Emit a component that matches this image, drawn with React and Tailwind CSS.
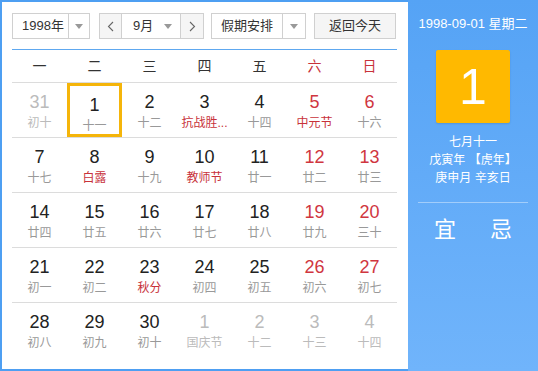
const FONT = { fontFamily: '"Liberation Sans", Arial, "Noto Sans CJK SC", sans-serif' }

const weekdays = ['一', '二', '三', '四', '五', '六', '日']

// [day, lunar, muted, lunarRed]
const weeks = [
  [[31, '初十', true], [1, '十一'], [2, '十二'], [3, '抗战胜...', false, true], [4, '十四'], [5, '中元节', false, true], [6, '十六']],
  [[7, '十七'], [8, '白露', false, true], [9, '十九'], [10, '教师节', false, true], [11, '廿一'], [12, '廿二'], [13, '廿三']],
  [[14, '廿四'], [15, '廿五'], [16, '廿六'], [17, '廿七'], [18, '廿八'], [19, '廿九'], [20, '三十']],
  [[21, '初一'], [22, '初二'], [23, '秋分', false, true], [24, '初四'], [25, '初五'], [26, '初六'], [27, '初七']],
  [[28, '初八'], [29, '初九'], [30, '初十'], [1, '国庆节', true], [2, '十二', true], [3, '十三', true], [4, '十四', true]]
]

function Caret() {
  return (
    <svg width="8" height="5" viewBox="0 0 8 5">
      <path d="M0 0h8L4 5z" fill="#999" />
    </svg>
  )
}

function Select({ label, width, textW }) {
  return (
    <div className="flex h-[26px] items-stretch border border-[#d0d0d0] bg-white" style={{ width }}>
      <div className="flex items-center pl-[9px] text-[13px] text-[#333]" style={{ width: textW }}>{label}</div>
      <div className="flex flex-1 items-center justify-center border-l border-[#d0d0d0]">
        <Caret />
      </div>
    </div>
  )
}

function Chevron({ dir }) {
  return (
    <svg width="7" height="11" viewBox="0 0 7 11">
      <path d={dir === 'l' ? 'M6 1L1.5 5.5 6 10' : 'M1 1l4.5 4.5L1 10'} fill="none" stroke="#666" strokeWidth="1.1" />
    </svg>
  )
}

export default function App() {
  return (
    <div className="flex h-[371px] w-[538px] overflow-hidden" style={FONT}>
      {/* calendar body */}
      <div className="flex w-[408px] flex-col border-y-2 border-l-2 border-[#4e9ff2] bg-white pl-[10px] pr-[11px]">
        <div className="flex items-center pt-[11px]">
          <Select label="1998年" width={78} textW={55} />
          <div className="ml-[9px] flex h-[26px] w-[105px] border border-[#d0d0d0]">
            <div className="flex w-[21px] items-center justify-center bg-[#f5f5f5]"><Chevron dir="l" /></div>
            <div className="flex flex-1 items-center border-l border-[#d0d0d0] pl-[11px] text-[13px] text-[#333]">
              <span className="flex-1">9月</span>
              <span className="mr-[8px] flex"><Caret /></span>
            </div>
            <div className="flex w-[23px] items-center justify-center border-l border-[#d0d0d0] bg-[#f5f5f5]"><Chevron dir="r" /></div>
          </div>
          <div className="ml-[7px]">
            <Select label="假期安排" width={95} textW={70} />
          </div>
          <div className="ml-[8px] flex h-[26px] w-[82px] items-center justify-center border border-[#d0d0d0] bg-[#f5f5f5] text-[13px] text-[#333]">
            返回今天
          </div>
        </div>

        <div className="mt-[10px] grid h-[34px] grid-cols-7 border-t border-b border-t-[#5ea8f0] border-b-[#dcdcdc] text-[14px]">
          {weekdays.map((w, i) => (
            <div key={w} className={`flex items-center justify-center ${i > 4 ? 'text-[#c8323a]' : 'text-[#333]'}`}>{w}</div>
          ))}
        </div>

        {weeks.map((row, r) => (
          <div key={r} className={`grid h-[55px] grid-cols-7 ${r < 4 ? 'border-b border-[#dcdcdc]' : ''}`}>
            {row.map(([d, lunar, muted, red], c) => {
              const selected = r === 0 && c === 1
              const numColor = muted ? 'text-[#bbb]' : c > 4 ? 'text-[#d0363f]' : 'text-[#222]'
              const lunarColor = muted ? 'text-[#bbb]' : red ? 'text-[#c8323a]' : 'text-[#999]'
              return (
                <div key={c} className={`flex flex-col items-center pt-[8px] ${selected ? 'border-[3px] border-[#f5b50a] pt-[5px]' : ''}`}>
                  <div className={`text-[18px] leading-[22px] ${numColor}`}>{d}</div>
                  <div className={`mt-[2px] text-[12px] leading-[16px] ${lunarColor}`}>{lunar}</div>
                </div>
              )
            })}
          </div>
        ))}
      </div>

      {/* side panel */}
      <div className="flex flex-1 flex-col items-center bg-gradient-to-b from-[#55a3f5] to-[#70b4fb] text-white">
        <div className="mt-[16px] text-[13px] leading-[16px]">1998-09-01 星期二</div>
        <div className="mt-[18px] flex h-[73px] w-[74px] items-center justify-center rounded-[2px] bg-[#ffb900] text-[50px] leading-none shadow-[0_1px_2px_rgba(0,0,0,0.12)]">
          1
        </div>
        <div className="mt-[10px] flex flex-col items-center text-[12px] leading-[18px]">
          <div>七月十一</div>
          <div>戊寅年 【虎年】</div>
          <div>庚申月 辛亥日</div>
        </div>
        <div className="mt-[15px] h-px w-[110px] bg-white/40" />
        <div className="mt-[12px] flex w-full justify-center gap-[34px] text-[22px] leading-[30px]">
          <span>宜</span>
          <span>忌</span>
        </div>
      </div>
    </div>
  )
}
